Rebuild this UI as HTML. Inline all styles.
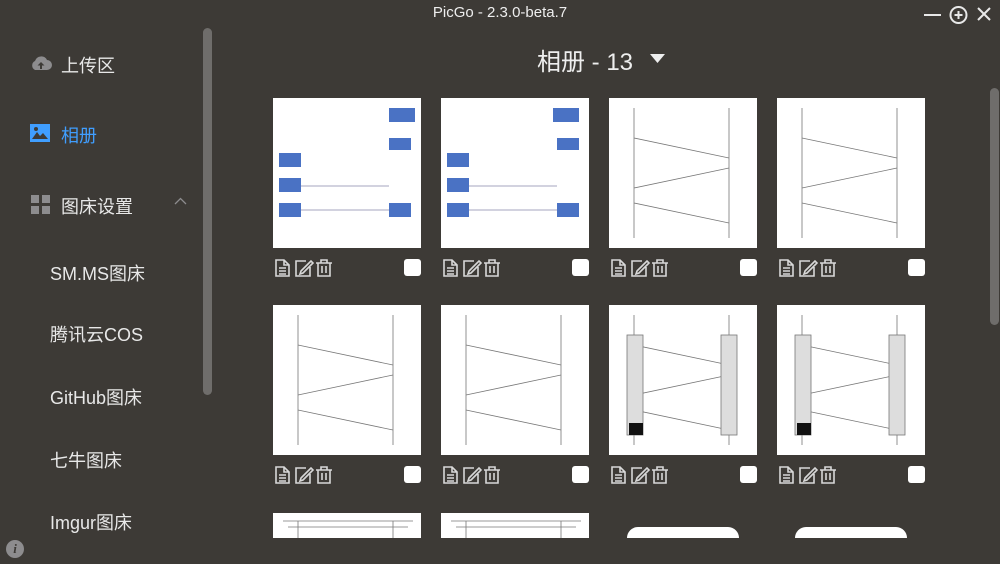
<!DOCTYPE html>
<html><head><meta charset="utf-8"><style>
*{margin:0;padding:0;box-sizing:border-box}
html,body{width:1000px;height:564px;overflow:hidden}
body{background:#3d3a36;position:relative;font-family:"Liberation Sans","Noto Sans CJK SC",sans-serif;color:#e6e6e6}
.a{position:absolute}
.title{left:0;width:1000px;top:4px;text-align:center;font-size:15px;color:#eee}
.nav{font-size:18px;color:#e8e8e8}
.sub{left:50px;font-size:18px;color:#e8e8e8}
.thumb{background:#fff;width:148px;height:150px;overflow:hidden}
.cb{width:17px;height:17px;background:#fff;border-radius:3px}
.sb{background:#6f6d6b;border-radius:5px;width:9px}
</style></head><body>
<div class="a title">PicGo - 2.3.0-beta.7</div>
<svg class="a" style="left:920px;top:3px" width="80" height="22" viewBox="0 0 80 22" fill="none" stroke="#e8e8e8" stroke-width="2">
<line x1="4" y1="12" x2="21" y2="12"/>
<circle cx="38.5" cy="12" r="8"/><line x1="38.5" y1="8" x2="38.5" y2="16"/><line x1="34.5" y1="12" x2="42.5" y2="12"/>
<line x1="58" y1="5" x2="70" y2="17"/><line x1="70" y1="5" x2="58" y2="17"/>
</svg>

<svg class="a" style="left:30px;top:54px" width="22" height="18" viewBox="0 0 22 18"><path d="M5 16 A5 5 0 0 1 5 7 A6.5 6.5 0 0 1 17 6 A5 5 0 0 1 17 16 Z" fill="#8d8c8e"/><path d="M11 8 L7.5 11.5 H10 V15 H12 V11.5 H14.5 Z" fill="#3d3a36"/></svg>
<div class="a nav" style="left:61px;top:52px">上传区</div>
<svg class="a" style="left:30px;top:124px" width="20" height="18" viewBox="0 0 20 18"><rect x="0" y="0" width="20" height="18" fill="#409eff"/><path d="M2 15 L7 8 L10 12 L13 9 L18 15 Z" fill="#3d3a36"/><circle cx="6" cy="5" r="2" fill="#3d3a36"/></svg>
<div class="a nav" style="left:61px;top:122px;color:#409eff">相册</div>
<svg class="a" style="left:31px;top:195px" width="19" height="19"><rect x="0" y="0" width="8" height="8" fill="#8d8c8e"/><rect x="11" y="0" width="8" height="8" fill="#8d8c8e"/><rect x="0" y="11" width="8" height="8" fill="#8d8c8e"/><rect x="11" y="11" width="8" height="8" fill="#8d8c8e"/></svg>
<div class="a nav" style="left:61px;top:193px">图床设置</div>
<svg class="a" style="left:174px;top:197px" width="13" height="8" fill="none" stroke="#8d8c8e" stroke-width="1.3"><path d="M1 7 L6.5 1.5 L12 7"/></svg>
<div class="a sub" style="top:260px">SM.MS图床</div>
<div class="a sub" style="top:321px">腾讯云COS</div>
<div class="a sub" style="top:384px">GitHub图床</div>
<div class="a sub" style="top:447px">七牛图床</div>
<div class="a sub" style="top:509px">Imgur图床</div>
<div class="a sb" style="left:203px;top:28px;height:367px"></div>
<div class="a" style="left:6px;top:540px;width:18px;height:18px;border-radius:50%;background:#8d8c8e;color:#3d3a36;font:italic bold 13px 'Liberation Serif',serif;text-align:center;line-height:18px">i</div>

<div class="a" style="left:537px;top:42px;font-size:24px;color:#eee">相册 - 13</div>
<svg class="a" style="left:650px;top:54px" width="15" height="9"><path d="M0 0 H15 L7.5 9 Z" fill="#eee"/></svg>
<div class="a sb" style="left:990px;top:88px;height:237px"></div>

<div id="g"></div>
<script>
var xs=[273,441,609,777],ys=[98,305,513],h='';
var ic='<svg width="60" height="20" viewBox="0 0 60 20" fill="none" stroke="#d8d8d8" stroke-width="1.6"><path d="M2 2 H10 L15 7 V18 H2 Z M10 2 V7 H15 M5 10 H12 M5 13 H12 M5 16 H12"/><path d="M32 3 H22 V18 H36 V9 M27 13 L37 3 L39 5 L29 15 L26 16 Z"/><path d="M42 5 H58 M47 5 V2 H53 V5 M44 5 V18 H56 V5 M48 8 V15 M52 8 V15"/></svg>';
for(var r=0;r<3;r++)for(var c=0;c<4;c++){var n=r*4+c;if(r==2&&c>1)continue;var x=xs[c],y=ys[r];
var hh=r==2?25:150;
var s='<div class="a thumb" style="left:'+x+'px;top:'+y+'px;height:'+hh+'px"><svg width="148" height="150" stroke="#777" stroke-width="0.8" fill="none">';
if(n<2){s+='<rect x="'+(n?112:116)+'" y="10" width="26" height="14" fill="#4a72c4" stroke="none"/><rect x="116" y="40" width="22" height="12" fill="#4a72c4" stroke="none"/><rect x="116" y="105" width="22" height="14" fill="#4a72c4" stroke="none"/><rect x="6" y="55" width="22" height="14" fill="#4a72c4" stroke="none"/><rect x="6" y="80" width="22" height="14" fill="#4a72c4" stroke="none"/><rect x="6" y="105" width="22" height="14" fill="#4a72c4" stroke="none"/><line x1="28" y1="88" x2="116" y2="88" stroke="#88a"/><line x1="28" y1="112" x2="116" y2="112" stroke="#88a"/>';}
else if(r==2){s+='<line x1="10" y1="8" x2="140" y2="8"/><line x1="15" y1="14" x2="135" y2="14"/><line x1="25" y1="8" x2="25" y2="25"/><line x1="120" y1="8" x2="120" y2="25"/>';}
else{s+='<line x1="25" y1="10" x2="25" y2="140"/><line x1="120" y1="10" x2="120" y2="140"/><line x1="25" y1="40" x2="120" y2="60"/><line x1="120" y1="70" x2="25" y2="90"/><line x1="25" y1="105" x2="120" y2="125"/>';
if(n>=6){s+='<rect x="18" y="30" width="16" height="100" fill="#ddd"/><rect x="112" y="30" width="16" height="100" fill="#ddd"/><rect x="20" y="118" width="14" height="12" fill="#111" stroke="none"/>';}}
s+='</svg></div>';h+=s;
if(r<2){h+='<div class="a" style="left:'+(x+1)+'px;top:'+(y+160)+'px">'+ic+'</div><div class="a cb" style="left:'+(x+131)+'px;top:'+(y+161)+'px"></div>';}}
h+='<div class="a" style="left:627px;top:527px;width:112px;height:11px;border-radius:40px 40px 0 0;background:#fff"></div><div class="a" style="left:795px;top:527px;width:112px;height:11px;border-radius:40px 40px 0 0;background:#fff"></div>';
document.getElementById('g').innerHTML=h;
</script>
</body></html>
